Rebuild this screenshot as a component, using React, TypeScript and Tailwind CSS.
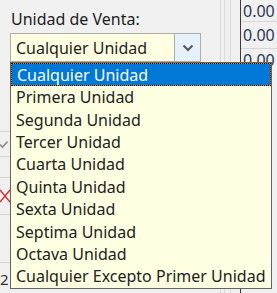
import React from "react";

const items = [
  "Cualquier Unidad",
  "Primera Unidad",
  "Segunda Unidad",
  "Tercer Unidad",
  "Cuarta Unidad",
  "Quinta Unidad",
  "Sexta Unidad",
  "Septima Unidad",
  "Octava Unidad",
  "Cualquier Excepto Primer Unidad",
];

export default function App() {
  return (
    <div className="relative w-[277px] h-[293px] overflow-hidden bg-[#f0f0f0] font-['Noto_Sans','Open_Sans',sans-serif] text-[16px] leading-none text-[#1e1e1e]">
      <div className="flex h-full">
        {/* left strip of a grid */}
        <div className="w-[10px] flex flex-col shrink-0">
          <div className="h-[132px] border-b border-[#d6d6d6]" />
          <div className="h-[25px] border-b border-[#d6d6d6] flex items-center">
            <svg width="9" height="9" viewBox="0 0 9 9" className="ml-[-1px]">
              <path d="M1 4.5 L3.5 7 L8.5 1.5" stroke="#8a8a8a" strokeWidth="1.6" fill="none" />
            </svg>
          </div>
          <div className="h-[21px] border-b border-[#d6d6d6]" />
          <div className="h-[37px] border-b border-[#d6d6d6] flex items-center">
            <svg width="10" height="16" viewBox="0 0 10 16">
              <path d="M0 2 L10 14 M10 2 L0 14" stroke="#e02020" strokeWidth="1.3" fill="none" />
            </svg>
          </div>
          <div className="h-[48px] border-b border-[#d6d6d6]" />
          <div className="flex-1 flex items-start pt-[9px] text-[15px] text-[#333]">2</div>
        </div>
        {/* middle */}
        <div className="w-[210px] shrink-0 flex flex-col">
          <div className="h-[33px] pl-[1px] pt-[11px] text-[16px]">Unidad de Venta:</div>
          <div className="flex h-[29px] w-[191px] border border-[#adadad] bg-[#ffffe1]">
            <div className="flex-1 pl-[5px] pt-[1px] flex items-center">Cualquier Unidad</div>
            <div className="w-[26px] bg-[#e5f1fb] border-l border-[#adadad] flex items-center justify-center">
              <svg width="12" height="8" viewBox="0 0 12 8">
                <path d="M1.5 1.5 L6 6 L10.5 1.5" stroke="#555" strokeWidth="2" fill="none" />
              </svg>
            </div>
          </div>
        </div>
        {/* separator lines */}
        <div className="w-[20px] shrink-0 flex">
          <div className="w-[4px] border-l border-[#dcdcdc]" />
          <div className="w-[6px] border-l border-[#dcdcdc]" />
          <div className="w-[10px] border-l border-[#dcdcdc]" />
        </div>
        {/* right grid */}
        <div className="flex-1 border-l border-[#3c3c3c] flex flex-col">
          <div className="h-[22px] border-b border-[#d6d6d6] pl-[2px] flex items-center text-[#2a3a55]">0.00</div>
          <div className="h-[27px] border-b border-[#d6d6d6] pl-[2px] flex items-center text-[#2a3a55]">0.00</div>
          <div className="h-[22px] pl-[2px] flex items-center text-[#2a3a55]">0.00</div>
        </div>
      </div>

      {/* dropdown list */}
      <div className="absolute left-[10px] top-[62px] w-[262px] h-[227px] border border-[#646464] bg-[#ffffe1] flex flex-col">
        {items.map((t, i) =>
          i === 0 ? (
            <div
              key={t}
              className="relative h-[23px] bg-[#0078d7] text-white flex items-center pl-[5px] border border-[#d08a30]"
            >
              <div className="absolute inset-[-1px] border border-dotted border-[#111]" />
              {t}
            </div>
          ) : (
            <div key={t} className="h-[22.4px] flex items-center pl-[5px] text-[#222]">
              {t}
            </div>
          )
        )}
      </div>
    </div>
  );
}
